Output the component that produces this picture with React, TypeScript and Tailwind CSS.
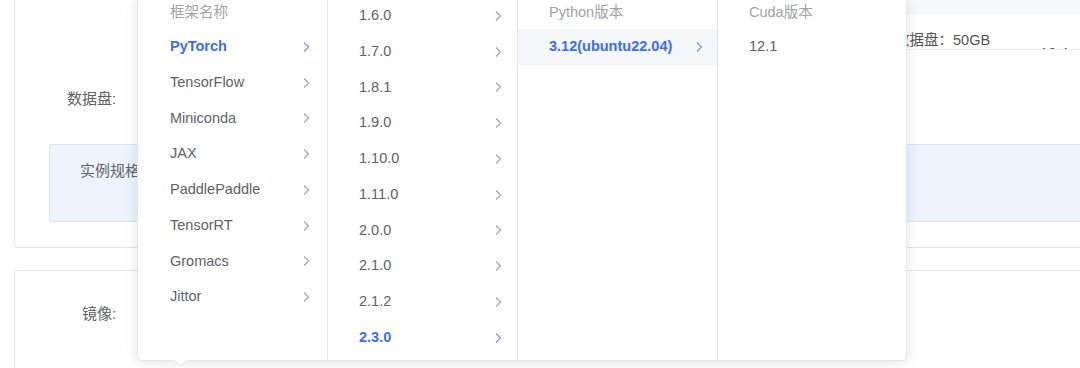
const frameworks = ['PyTorch', 'TensorFlow', 'Miniconda', 'JAX', 'PaddlePaddle', 'TensorRT', 'Gromacs', 'Jittor'];
const versions = ['1.6.0', '1.7.0', '1.8.1', '1.9.0', '1.10.0', '1.11.0', '2.0.0', '2.1.0', '2.1.2', '2.3.0'];

const cn = '[font-family:"Liberation_Sans","Noto_Sans_CJK_SC",sans-serif]';

function Arrow({ active }: { active?: boolean }) {
  return (
    <svg width="12" height="14" viewBox="0 0 12 14" className="shrink-0">
      <path d="M4 2.5 L8.5 7 L4 11.5" fill="none" stroke={active ? '#6f93f5' : '#a0a3a8'} strokeWidth="1.1" />
    </svg>
  );
}

function Row({ label, active, chevron = true, pad = 'pl-[32px] pr-[15px]' }: { label: string; active?: boolean; chevron?: boolean; pad?: string }) {
  return (
    <div className={`h-[35.75px] flex items-center justify-between ${pad} ${active ? 'text-[#3c6cf4] font-bold' : 'text-[#606266]'}`}>
      <span>{label}</span>
      {chevron && <Arrow active={active} />}
    </div>
  );
}

export default function App() {
  return (
    <div className={`relative w-[1080px] h-[368px] overflow-hidden bg-white text-[15px] ${cn}`}>
      {/* background form */}
      <div className="pl-[14px]">
        <div className="w-[1100px] h-[248px] border-x border-b border-[#e4e7ed] rounded-bl-[4px]">
          <div className="h-[50px] flex">
            <div className="w-[545px]" />
            <div className="flex-1 flex flex-col">
              <div className="h-[15px] bg-[#f7f8fa]" />
              <div className="h-[35px] border-b border-[#ebeef5] overflow-hidden flex items-start text-[14.5px]">
                <span className="pl-[335px] pt-[15px] text-[#555]">数据盘：50GB</span>
                <span className="pl-[50px] pt-[28px] text-[#555]">10.4</span>
              </div>
            </div>
          </div>
          <div className="h-[94px] pl-[52px] pt-[38px] text-[#606266]">数据盘:</div>
          <div className="ml-[34px] h-[78px] bg-[#edf4ff] border border-[#d6e6fc] rounded-l-[2px] pl-[30px] pt-[15px] text-[#606266]">
            实例规格
          </div>
        </div>
        <div className="mt-[22px] w-[1100px] h-[120px] border border-[#e4e7ed] rounded-t-[4px] pl-[67px] pt-[32px] text-[#606266]">
          镜像:
        </div>
      </div>

      {/* cascader dropdown */}
      <div className="absolute left-[137px] top-[-4px] w-[770px] h-[365px] bg-white border border-[#e4e7ed] rounded-[4px] shadow-[0_2px_14px_rgba(0,0,0,0.1)] flex text-[14.5px]">
        <div className="w-[190px] border-r border-[#e4e7ed] pt-[4px]">
          <div className="h-[28px] pl-[32px] pt-[1px] text-[#a0a3a8]">框架名称</div>
          {frameworks.map((f, i) => (
            <Row key={f} label={f} active={i === 0} />
          ))}
        </div>
        <div className="w-[190px] border-r border-[#e4e7ed] overflow-hidden">
          <div className="mt-[1px]">
            {versions.map((v, i) => (
              <Row key={v} label={v} active={i === versions.length - 1} pad="pl-[31px] pr-[13px]" />
            ))}
          </div>
        </div>
        <div className="w-[200px] border-r border-[#e4e7ed] pt-[4px]">
          <div className="h-[28px] pl-[31px] pt-[1px] text-[#a0a3a8]">Python版本</div>
          <div className="bg-[#f5f7fa]">
            <Row label="3.12(ubuntu22.04)" active pad="pl-[31px] pr-[12px]" />
          </div>
        </div>
        <div className="flex-1 pt-[4px]">
          <div className="h-[28px] pl-[31px] pt-[1px] text-[#a0a3a8]">Cuda版本</div>
          <Row label="12.1" chevron={false} pad="pl-[31px]" />
        </div>
        <div className="absolute left-[38px] bottom-[-5px] w-[9px] h-[9px] bg-white border-r border-b border-[#e4e7ed] rotate-45" />
      </div>
    </div>
  );
}
